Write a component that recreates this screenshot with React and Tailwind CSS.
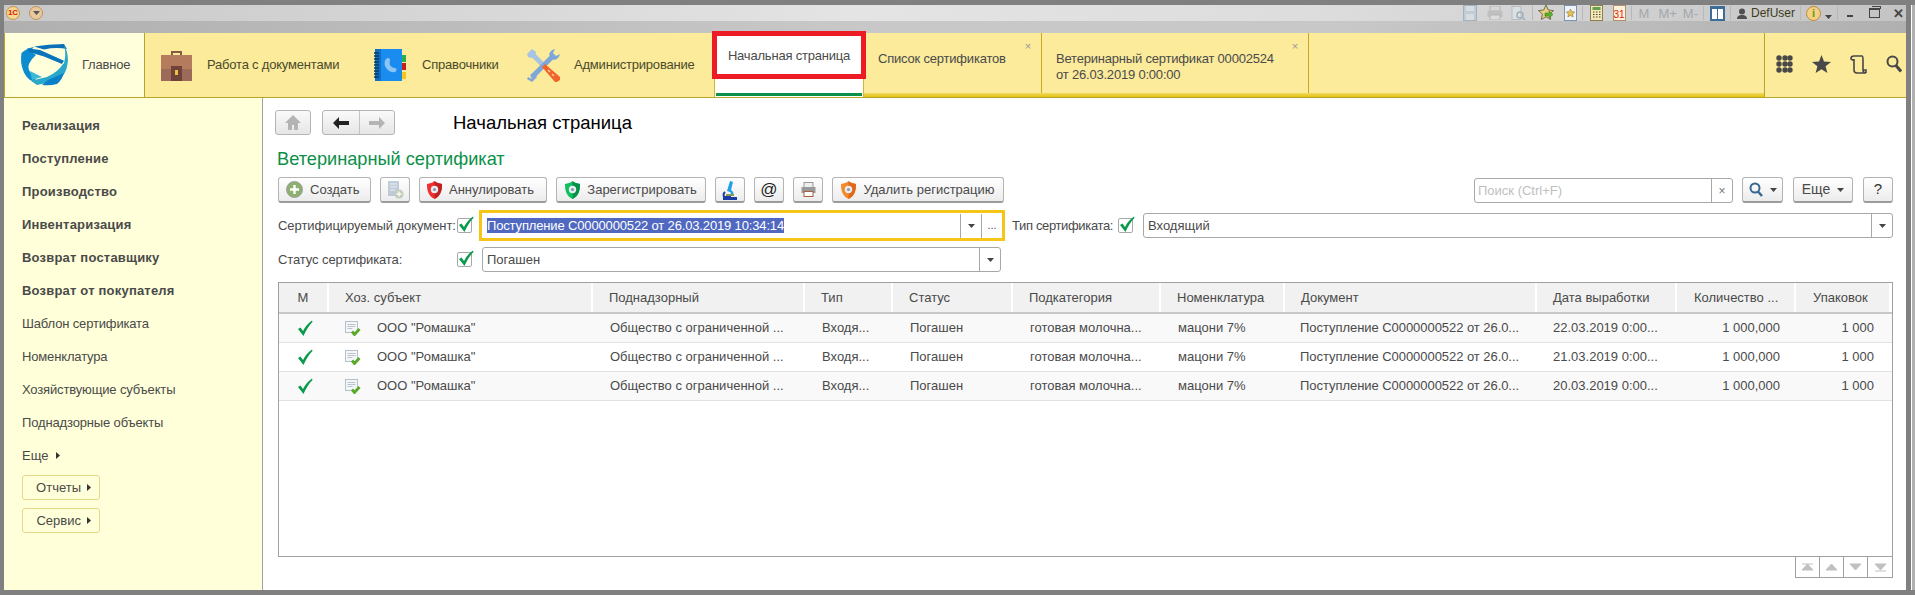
import React from "react";

const Logo = () => (
  <svg width="48" height="43" viewBox="0 0 48 43" className="shrink-0">
    <path d="M14 3Q7 4 1.500 9Q0 18 3 26Q5 32 10 36L18 39L10 28Q7.500 24 9 20Q11 15 16 11L10 7z" fill="#0b8bd0" />
    <path d="M14 2.500Q28 0 44 0L47 5Q36 3 24 5.500z" fill="#0a70b8" />
    <path d="M7.300 4.300L20 6L44 16.700L42 20L24 12.500L9 8z" fill="#0a74bc" />
    <path d="M44 0Q48 8 48 16.700Q47 25 44 30L38 31Q42 27 43 22Q46 14 45 6z" fill="#2aa8cc" />
    <path d="M43 20Q38 28 27 33L10.700 36.700L17 41L30.700 38Q38 35 44 30Q47 25 47 20z" fill="#2aa8cc" />
    <path d="M10 27L22 33L12 36z" fill="#3bb8d4" />
    <path d="M28 36L44 29Q42 36 37 40Q30 42 22 41z" fill="#0b80c8" />
  </svg>
);
const Briefcase = () => (
  <svg width="33" height="33" viewBox="0 0 33 33" className="shrink-0">
    <path d="M11 6V2h11v4h-2V4h-7v2z" fill="#8a5a48" />
    <rect x="1" y="6" width="31" height="15" fill="#b47c5c" />
    <rect x="1" y="20" width="31" height="12" fill="#9c6a58" />
    <rect x="11" y="17" width="11" height="15" fill="#6e4238" />
    <rect x="15" y="21" width="3" height="5" fill="#f0c040" />
  </svg>
);
const Book = () => (
  <svg width="34" height="34" viewBox="0 0 34 34" className="shrink-0">
    <rect x="27" y="7" width="5" height="7" fill="#22b14c" />
    <rect x="27" y="15" width="5" height="7" fill="#c81e1e" />
    <rect x="27" y="24" width="5" height="7" fill="#f5c518" />
    <rect x="1" y="1" width="27" height="32" fill="#1a8cf0" />
    <rect x="1" y="1" width="6" height="32" fill="#0f6fc4" />
    <path d="M0 5h5M0 8h5M0 11h5M0 14h5M0 17h5M0 20h5M0 23h5M0 26h5M0 29h5" stroke="#0a3a5c" strokeWidth="1.300" />
    <path d="M12 11c2-2 4-1 4 1 0 2-1 3 0 5s3 3 5 3c2 0 2 3 0 4-4 1-8-2-10-6-1-3 0-6 1-7z" fill="#8cc4f4" />
  </svg>
);
const Tools = () => (
  <svg width="33" height="33" viewBox="0 0 33 33" className="shrink-0">
    <path d="M5 5L18 18" stroke="#a8c4e4" strokeWidth="5" />
    <path d="M0 5L5 0L9 3L8 7L4 9L1 8z" fill="#a8c4e4" />
    <path d="M6 27L26 7" stroke="#7ea6d8" strokeWidth="5" />
    <path d="M22 6Q23 1 28 0L26 4L29 7L33 5Q32 10 27 11z" fill="#7ea6d8" />
    <path d="M8 25L10 28L5 33L0 30L1 28L5 30L3 26L6 24z" fill="#7ea6d8" />
    <path d="M15 18L18 15L33 28V31L30 33H28z" fill="#f2642a" />
    <path d="M21 21l2 2M25 25l2 2" stroke="#ffd0b0" strokeWidth="1.200" />
  </svg>
);
const Tri = ({ c = "#444" }) => (
  <svg width="7" height="4" viewBox="0 0 7 4" className="shrink-0"><path d="M0 0h7L3.500 4z" fill={c} /></svg>
);
const TriRight = () => (
  <svg width="4" height="7" viewBox="0 0 4 7" className="shrink-0"><path d="M0 0v7l4-3.500z" fill="#333" /></svg>
);
const Shield = ({ a, b }) => (
  <svg width="15" height="18" viewBox="0 0 15 18" className="shrink-0">
    <path d="M7.500 0C5.500 2 3 2.500 0 3c0 7 1.500 12 7.500 15C13.500 15 15 10 15 3c-3-.5-5.500-1-7.500-3z" fill={a} />
    <path d="M7.500 0C9.500 2 12 2.500 15 3c0 7-1.500 12-7.500 15z" fill={b} />
    <circle cx="7.500" cy="8.500" r="3.700" fill="#e8eef0" />
    <circle cx="7.500" cy="8.500" r="1.600" fill="#8a9aa8" />
  </svg>
);
const PlusRound = () => (
  <svg width="17" height="17" viewBox="0 0 17 17" className="shrink-0">
    <circle cx="8.500" cy="8.500" r="8" fill="#8cb070" stroke="#a0a0a0" />
    <path d="M8.500 4v9M4 8.500h9" stroke="#fff" strokeWidth="2.400" />
  </svg>
);
const Check = ({ s = 17 }) => (
  <svg width={s} height={s} viewBox="0 0 17 17" className="shrink-0">
    <path d="M2 9l2.500-1.500L7 11C9 7 12 3 16 0.500L16.500 2C12.500 6 10 10.500 7.500 16z" fill="#0a9a4c" />
  </svg>
);
const Checkbox = () => (
  <div className="relative w-[15px] h-[15px] border border-[#a8a8a8] rounded-[2px] shrink-0 bg-white">
    <div className="absolute -left-px -top-[3px]"><Check /></div>
  </div>
);
const DocCheck = () => (
  <svg width="16" height="15" viewBox="0 0 16 15" className="shrink-0">
    <rect x="0.500" y="0.500" width="12" height="11" fill="#f4f6f8" stroke="#b4c0cc" />
    <path d="M2.500 3.500h8M2.500 5.500h8M2.500 7.500h5" stroke="#b8c4d0" />
    <path d="M7 10.500l2.500 3 5-5.500" fill="none" stroke="#5aa82c" strokeWidth="2.800" />
  </svg>
);
const Btn = ({ children, w, left }) => (
  <div className={`${w} h-[26px] flex items-center ${left ? "justify-start pl-[7px]" : "justify-center"} gap-[7px] border border-[#b4b4b4] border-b-2 border-b-[#9c9c9c] rounded-[3px] bg-[linear-gradient(to_bottom,#ffffff,#ececec)] text-[#4a4a4a] shrink-0`}>
    {children}
  </div>
);
const Sep = () => <div className="w-px h-[14px] bg-[#b8b8b8] mx-[5px] shrink-0" />;

const Title = () => (
  <div className="h-[28px] flex flex-col shrink-0">
    <div className="h-[16px] flex items-center bg-[linear-gradient(to_right,#c8c8c8,#e4e4e4_45%,#dcdcdc_70%,#c4c4c4)]">
      <div className="ml-[2px] w-[14px] h-[14px] rounded-full bg-[#f5d890] border border-[#c8924c] flex items-center justify-center text-[8px] leading-none font-bold text-[#d02010]">1С</div>
      <div className="ml-[9px] w-[14px] h-[14px] rounded-full bg-[#e8c89c] border border-[#c09060] flex items-center justify-center"><Tri c="#555" /></div>
      <div className="ml-auto mr-px flex items-center text-[#a4a8ac]">
        <svg width="14" height="16" viewBox="0 0 14 16" className="shrink-0" opacity="0.7"><rect x="0.500" y="0.500" width="13" height="15" fill="#b8c8d4" stroke="#8ea4b4" /><rect x="3" y="1" width="8" height="5" fill="#d8e0e6" /><rect x="3" y="9" width="8" height="6" fill="#d8e0e6" /></svg>
        <svg width="16" height="14" viewBox="0 0 16 14" className="ml-[10px] shrink-0" opacity="0.7"><rect x="3" y="0" width="10" height="5" fill="#d8d8d8" stroke="#a8a8a8" /><rect x="0.500" y="5" width="15" height="6" fill="#b8b8b8" /><rect x="3" y="9" width="10" height="5" fill="#e0e0e0" stroke="#a8a8a8" /></svg>
        <svg width="16" height="15" viewBox="0 0 16 15" className="ml-[8px] shrink-0" opacity="0.7"><rect x="1" y="0.500" width="9" height="13" fill="#e0e6ea" stroke="#a8b4bc" /><circle cx="9" cy="9" r="3" fill="none" stroke="#8aa0b0" strokeWidth="1.500" /><path d="M11 11l3 3" stroke="#8aa0b0" strokeWidth="1.500" /></svg>
        <Sep />
        <svg width="16" height="16" viewBox="0 0 16 16" className="shrink-0"><path d="M8 0l2.300 5 5.200.600-3.900 3.500 1.100 5.400L8 11.800 3.300 14.500l1.100-5.400L.500 5.600 5.700 5z" fill="#e8d080" stroke="#707050" /><path d="M7 8h4V6l4 3.500-4 3.500v-2H7z" fill="#58b030" stroke="#387018" strokeWidth="0.500" /></svg>
        <svg width="13" height="16" viewBox="0 0 13 16" className="ml-[10px] shrink-0"><rect x="0.500" y="0.500" width="12" height="15" fill="#f0f4f8" stroke="#7a94b0" /><path d="M6.500 4l1.300 2.700 3 .3-2.200 2 .6 3-2.700-1.500L3.800 12l.6-3-2.200-2 3-.3z" fill="#e8c050" stroke="#806830" strokeWidth="0.500" /></svg>
        <Sep />
        <svg width="13" height="16" viewBox="0 0 13 16" className="ml-[2px] shrink-0"><rect x="0.500" y="0.500" width="12" height="15" fill="#f4e8b8" stroke="#8a8050" /><rect x="2.500" y="2" width="8" height="3" fill="#60a050" /><path d="M3 7h1.500M6 7h1.500M9 7h1.500M3 9.500h1.500M6 9.500h1.500M9 9.500h1.500M3 12h1.500M6 12h1.500M9 12h1.500" stroke="#504020" /></svg>
        <div className="ml-[10px] w-[13px] h-[16px] bg-[#fff0d8] border border-[#b09070] flex items-end justify-center text-[10px] leading-[11px] text-[#e02010] shrink-0">31</div>
        <Sep />
        <span className="text-[13px] leading-none ml-[2px]">M</span>
        <span className="text-[13px] leading-none ml-[9px]">M+</span>
        <span className="text-[13px] leading-none ml-[6px]">M-</span>
        <Sep />
        <div className="ml-px w-[15px] h-[15px] border-2 border-t-[3px] border-[#3c6c98] bg-white flex justify-center shrink-0"><div className="w-px bg-[#3c6c98]" /></div>
        <Sep />
        <svg width="10" height="11" viewBox="0 0 10 11" className="ml-px shrink-0"><circle cx="5" cy="3.500" r="3" fill="#505050" /><path d="M0 11c0-3 2-4 5-4s5 1 5 4z" fill="#505050" /></svg>
        <span className="ml-[4px] text-[12px] leading-none text-[#3c3c20]">DefUser</span>
        <Sep />
        <div className="w-[15px] h-[15px] rounded-full bg-[#f4d080] border border-[#b88a40] flex items-center justify-center text-[11px] leading-none font-bold text-[#5a9a28] shrink-0">i</div>
        <div className="ml-[4px] mt-[8px]"><Tri /></div>
        <Sep />
        <div className="ml-[4px] w-[6px] h-[2px] mt-[6px] bg-[#444]" />
        <div className="ml-[16px] relative w-[11px] h-[10px] border border-t-2 border-[#444] shrink-0"><div className="absolute -top-[4px] left-[2px] w-[9px] h-[3px] border-t border-r border-[#444]" /></div>
        <span className="ml-[13px] mr-px text-[13px] leading-none font-bold text-[#444]">✕</span>
      </div>
    </div>
    <div className="flex-1 bg-[linear-gradient(to_right,#b0b0b0,#c8c8c8_45%,#c8c8c8_70%,#b0b0b0)]" />
  </div>
);

const NavItem = ({ icon, text, w }) => (
  <div className={`${w} flex items-center shrink-0 text-[13px] text-[#4a4a2a]`}>{icon}<span className="ml-[14px] whitespace-nowrap">{text}</span></div>
);

const Nav = () => (
  <div className="relative h-[65px] flex shrink-0 bg-[#fbeb9b] border-b border-[#b8a428] text-[13px] tracking-[-0.2px]">
    <div className="w-[141px] shrink-0 flex items-center pl-[15px] bg-[#ffffdc] border-l border-r border-[#b8a428] text-[#4a4a4a]">
      <Logo /><span className="ml-[14px]">Главное</span>
    </div>
    <div className="w-[569px] shrink-0 flex items-center pl-[15px]">
      <NavItem icon={<Briefcase />} text="Работа с документами" w="w-[214px]" />
      <NavItem icon={<Book />} text="Справочники" w="w-[153px]" />
      <NavItem icon={<Tools />} text="Администрирование" w="w-[186px]" />
    </div>
    <div className="w-[150px] shrink-0 bg-white flex flex-col border-x border-[#c8b840]">
      <div className="h-[52px] flex items-center justify-center pb-[6px] text-[#4a4a4a] whitespace-nowrap">Начальная страница</div>
      <div className="mt-[8px] h-[3px] mx-px bg-[#0a9048]" />
    </div>
    <div className="flex-1 flex flex-col">
      <div className="flex-1 flex">
        <div className="relative w-[178px] shrink-0 border-r border-[#c8a820] pl-[14px] pt-[18px] text-[#4a4a4a] whitespace-nowrap leading-[16px]">
          Список сертификатов
          <span className="absolute top-[8px] right-[10px] text-[11px] leading-none text-[#999]">×</span>
        </div>
        <div className="relative w-[267px] shrink-0 border-r border-[#c8a820] pl-[14px] pt-[18px] text-[#4a4a4a] whitespace-nowrap leading-[16px]">
          <div>Ветеринарный сертификат 00002524</div>
          <div>от 26.03.2019 0:00:00</div>
          <span className="absolute top-[8px] right-[10px] text-[11px] leading-none text-[#999]">×</span>
        </div>
        <div className="flex-1" />
      </div>
      <div className="h-[4px] bg-[linear-gradient(to_bottom,#f0dc60,#e4c010)]" />
    </div>
    <div className="w-[142px] shrink-0 border-l border-[#b8a428] flex items-center pl-[11px] pb-[2px]">
      <svg width="17" height="18" viewBox="0 0 17 18" className="shrink-0">
        {[3, 9, 15].map(y => [3, 9, 14].map(x => <circle key={`${x}-${y}`} cx={x} cy={y} r="2.700" fill="#484848" />))}
      </svg>
      <svg width="19" height="18" viewBox="0 0 19 18" className="ml-[19px] shrink-0"><path d="M9.500 0l2.500 6.500 7 .4-5.400 4.400 1.800 6.700-5.900-3.800-5.900 3.800 1.800-6.700L0 6.900l7-.4z" fill="#484848" /></svg>
      <svg width="17" height="19" viewBox="0 0 17 19" className="ml-[19px] shrink-0"><path d="M4 1h8c1 0 1 2 1 4v10c0 2 1 3 3 3H7c-2 0-3-1-3-3V4M4 1C2 1 1 2 1 3.500S2 5 4 5M13 15h3v3" fill="none" stroke="#484848" strokeWidth="1.600" /></svg>
      <svg width="16" height="18" viewBox="0 0 16 18" className="ml-[19px] shrink-0"><circle cx="6.500" cy="6.500" r="5" fill="none" stroke="#484848" strokeWidth="2" /><path d="M10 10.500l5 6" stroke="#484848" strokeWidth="3" /></svg>
    </div>
    <div className="absolute left-[708px] -top-[2px] w-[154px] h-[48px] border-[5px] border-[#ed1c24] pointer-events-none" />
  </div>
);

const side = ["Реализация", "Поступление", "Производство", "Инвентаризация", "Возврат поставщику", "Возврат от покупателя"];
const side2 = ["Шаблон сертификата", "Номенклатура", "Хозяйствующие субъекты", "Поднадзорные объекты"];

const Sidebar = () => (
  <div className="w-[259px] shrink-0 bg-[#ffffd9] border-r border-[#a0a0a0] pt-[11px] pl-[18px] text-[13px] text-[#4a4a4a]">
    {side.map(t => <div key={t} className="h-[33px] flex items-center font-bold tracking-[0.2px]">{t}</div>)}
    {side2.map(t => <div key={t} className="h-[33px] flex items-center tracking-[-0.15px]">{t}</div>)}
    <div className="h-[33px] flex items-center gap-[8px]">Еще <TriRight /></div>
    {["Отчеты", "Сервис"].map((t, i) => (
      <div key={t} className={`w-[78px] h-[25px] ${i ? "mt-[8px]" : "mt-[3px]"} flex items-center justify-end gap-[6px] pr-[8px] border border-[#e8d88c] rounded-[3px]`}>
        {t} <TriRight />
      </div>
    ))}
  </div>
);

const cols = "grid grid-cols-[50px_264px_212px_88px_120px_148px_124px_252px_140px_119px_95px]";
const heads = ["М", "Хоз. субъект", "Поднадзорный", "Тип", "Статус", "Подкатегория", "Номенклатура", "Документ", "Дата выработки", "Количество ...", "Упаковок"];
const rows = ["22", "21", "20"];

const Table = () => (
  <div className="mt-[10px]">
    <div className="h-[275px] w-[1615px] border border-[#a0a0a0] text-[13px] text-[#4a4a4a] bg-white">
      <div className={`${cols} h-[31px] border-b-2 border-[#c8c8c8]`}>
        {heads.map((h, i) => (
          <div key={h} className={`bg-[#f1f1f1] border-r-2 border-white flex items-center whitespace-nowrap ${i === 0 ? "justify-center" : i === 9 ? "pl-[17px]" : i === 10 ? "pl-[17px] border-r-0" : "pl-[16px]"}`}>{h}</div>
        ))}
      </div>
      {rows.map((d, i) => (
        <div key={d} className={`${cols} h-[29px] items-center border-b border-[#e2e2e2] whitespace-nowrap ${i % 2 === 0 ? "bg-[#f9f9f9]" : "bg-white"}`}>
          <div className="flex justify-center pl-px"><Check s={17} /></div>
          <div className="flex items-center pl-[16px]"><DocCheck /><span className="ml-[16px]">ООО "Ромашка"</span></div>
          <div className="pl-[17px]">Общество с ограниченной ...</div>
          <div className="pl-[17px]">Входя...</div>
          <div className="pl-[17px]">Погашен</div>
          <div className="pl-[17px]">готовая молочна...</div>
          <div className="pl-[17px]">мацони 7%</div>
          <div className="pl-[15px] tracking-[-0.05px]">Поступление С0000000522 от 26.0...</div>
          <div className="pl-[16px]">{d}.03.2019 0:00...</div>
          <div className="text-right pr-[16px]">1 000,000</div>
          <div className="text-right pr-[17px]">1 000</div>
        </div>
      ))}
    </div>
    <div className="w-[1615px] flex justify-end">
      <div className="h-[21px] flex border border-t-0 border-[#a0a0a0]">
        {["M1 1h11M1 7L6.500 1 12 7z", "M1 7L6.500 1 12 7z", "M1 1h11L6.500 7z", "M1 1h11L6.500 7zM1 8h11"].map((d, i) => (
          <div key={d} className={`w-[24px] flex items-center justify-center ${i < 3 ? "border-r border-[#a0a0a0]" : ""}`}>
            <svg width="13" height="9" viewBox="0 0 13 9" className="shrink-0"><path d={d} fill="#c0c0c0" stroke="#c0c0c0" /></svg>
          </div>
        ))}
      </div>
    </div>
  </div>
);

const Main = () => (
  <div className="flex-1 bg-white pt-[12px] pl-[15px] pr-[13px] text-[13px] text-[#4a4a4a]">
    <div className="h-[25px] flex items-center -ml-[3px]">
      <div className="w-[36px] h-[25px] border border-[#b4b4b4] rounded-[3px] bg-[linear-gradient(to_bottom,#fafafa,#e6e6e6)] flex items-center justify-center">
        <svg width="16" height="15" viewBox="0 0 16 15"><path d="M8 0L0 8h3v7h4v-5h2v5h4V8h3z" fill="#b4b4b4" /></svg>
      </div>
      <div className="ml-[11px] w-[73px] h-[25px] border border-[#b4b4b4] rounded-[3px] bg-[linear-gradient(to_bottom,#fafafa,#e6e6e6)] flex">
        <div className="w-[37px] border-r border-[#c4c4c4] flex items-center justify-center">
          <svg width="16" height="12" viewBox="0 0 16 12"><path d="M6 0L0 6l6 6V8h10V4H6z" fill="#222" /></svg>
        </div>
        <div className="flex-1 flex items-center justify-center">
          <svg width="16" height="12" viewBox="0 0 16 12"><path d="M10 0l6 6-6 6V8H0V4h10z" fill="#b4b4b4" /></svg>
        </div>
      </div>
      <div className="ml-[58px] text-[18.5px] text-black whitespace-nowrap">Начальная страница</div>
    </div>
    <div className="mt-[14px] -ml-px h-[20px] leading-[20px] text-[18.2px] text-[#0a9048] whitespace-nowrap">Ветеринарный сертификат</div>
    <div className="mt-[8px] flex items-start gap-[9px]">
      <Btn w="w-[93px]" left><PlusRound /><span>Создать</span></Btn>
      <Btn w="w-[30px]">
        <svg width="17" height="18" viewBox="0 0 17 18" opacity="0.6"><rect x="1" y="0" width="11" height="15" fill="#9cb0c8" /><path d="M3 3h7M3 6h7M3 9h5" stroke="#e4ecf4" /><circle cx="12" cy="13" r="4.500" fill="#a4b894" /><path d="M12 10.500v5M9.500 13h5" stroke="#fff" strokeWidth="1.400" /></svg>
      </Btn>
      <Btn w="w-[128px]" left><Shield a="#f03030" b="#c02020" /><span>Аннулировать</span></Btn>
      <Btn w="w-[150px]"><Shield a="#10c060" b="#089048" /><span>Зарегистрировать</span></Btn>
      <Btn w="w-[30px]">
        <svg width="16" height="20" viewBox="0 0 16 20"><rect x="1" y="17" width="14" height="3" fill="#1a3aa8" /><path d="M8 1l3 1-2 8c2 1 3 3 2 5H8c1-1 1-3 0-3L5 11z" fill="#20a0e8" /><path d="M3 12c-2 2-2 4 0 5h6" fill="none" stroke="#1a3aa8" strokeWidth="2" /><rect x="4" y="14" width="8" height="2" fill="#8a9a50" /></svg>
      </Btn>
      <Btn w="w-[30px]"><span className="text-[17px] leading-none text-[#222]">@</span></Btn>
      <Btn w="w-[30px]">
        <svg width="15" height="15" viewBox="0 0 15 15"><rect x="3" y="0.500" width="9" height="5" fill="#eee" stroke="#999" /><rect x="0.500" y="5" width="14" height="6" fill="#999" /><rect x="3" y="9.500" width="9" height="5" fill="#fff" stroke="#a86040" /></svg>
      </Btn>
      <Btn w="w-[172px]"><Shield a="#f58a30" b="#e06818" /><span>Удалить регистрацию</span></Btn>
      <div className="ml-auto flex items-start">
        <div className="w-[259px] h-[25px] mt-px border border-[#a8a8a8] rounded-[3px] flex items-center">
          <span className="flex-1 pl-[3px] text-[#c0c0c0]">Поиск (Ctrl+F)</span>
          <div className="w-[21px] h-full border-l border-[#a8a8a8] flex items-center justify-center text-[#777] text-[12px] leading-none">×</div>
        </div>
        <div className="ml-[9px]"><Btn w="w-[41px]">
          <svg width="14" height="15" viewBox="0 0 14 15"><circle cx="6" cy="6" r="4.500" fill="none" stroke="#386890" strokeWidth="2" /><path d="M9 9.500l4 4.500" stroke="#386890" strokeWidth="2.500" /></svg>
          <Tri />
        </Btn></div>
        <div className="ml-[10px]"><Btn w="w-[60px]"><span className="text-[14px]">Еще</span><Tri /></Btn></div>
        <div className="ml-[10px]"><Btn w="w-[30px]"><span className="text-[15px] text-[#333]">?</span></Btn></div>
      </div>
    </div>
    <div className="mt-[7px] h-[31px] flex items-center">
      <span className="w-[179px] shrink-0 whitespace-nowrap tracking-[-0.05px]">Сертифицируемый документ:</span>
      <Checkbox />
      <div className="ml-[7px] w-[526px] h-[31px] border-[3px] border-[#f5c518] flex items-center shrink-0 text-[#4a4a4a]">
        <div className="flex-1 pl-[5px]"><span className="bg-[#5068c0] text-white whitespace-nowrap tracking-[-0.15px]">Поступление С0000000522 от 26.03.2019 10:34:14</span></div>
        <div className="w-[21px] h-[24px] border-l border-[#a8a8a8] flex items-center justify-center shrink-0"><Tri /></div>
        <div className="w-[21px] h-[24px] border-l border-[#a8a8a8] flex items-center justify-center text-[11px] shrink-0">...</div>
      </div>
      <span className="ml-[7px] w-[106px] shrink-0 whitespace-nowrap tracking-[-0.35px]">Тип сертификата:</span>
      <Checkbox />
      <div className="ml-[10px] w-[750px] h-[25px] border border-[#a8a8a8] rounded-[3px] flex items-center shrink-0">
        <span className="flex-1 pl-[4px]">Входящий</span>
        <div className="w-[21px] h-full border-l border-[#a8a8a8] flex items-center justify-center"><Tri /></div>
      </div>
    </div>
    <div className="mt-[6px] h-[25px] flex items-center">
      <span className="w-[179px] shrink-0 tracking-[-0.1px]">Статус сертификата:</span>
      <Checkbox />
      <div className="ml-[10px] w-[519px] h-[25px] border border-[#a8a8a8] rounded-[3px] flex items-center shrink-0">
        <span className="flex-1 pl-[4px]">Погашен</span>
        <div className="w-[21px] h-full border-l border-[#a8a8a8] flex items-center justify-center"><Tri /></div>
      </div>
    </div>
    <Table />
  </div>
);

export default function App() {
  return (
    <div className="w-[1915px] h-[595px] overflow-hidden bg-[#808080] flex flex-col font-['Liberation_Sans',Arial,sans-serif]">
      <div className="h-[5px] shrink-0" />
      <div className="flex-1 flex min-h-0">
        <div className="w-[4px] shrink-0" />
        <div className="w-[1902px] shrink-0 flex flex-col">
          <Title />
          <Nav />
          <div className="flex-1 flex min-h-0">
            <Sidebar />
            <Main />
          </div>
        </div>
        <div className="w-[5px] shrink-0" />
        <div className="w-px shrink-0 bg-white" />
        <div className="w-[3px] shrink-0 bg-[#b0b0b0]" />
      </div>
      <div className="h-[5px] shrink-0" />
    </div>
  );
}
